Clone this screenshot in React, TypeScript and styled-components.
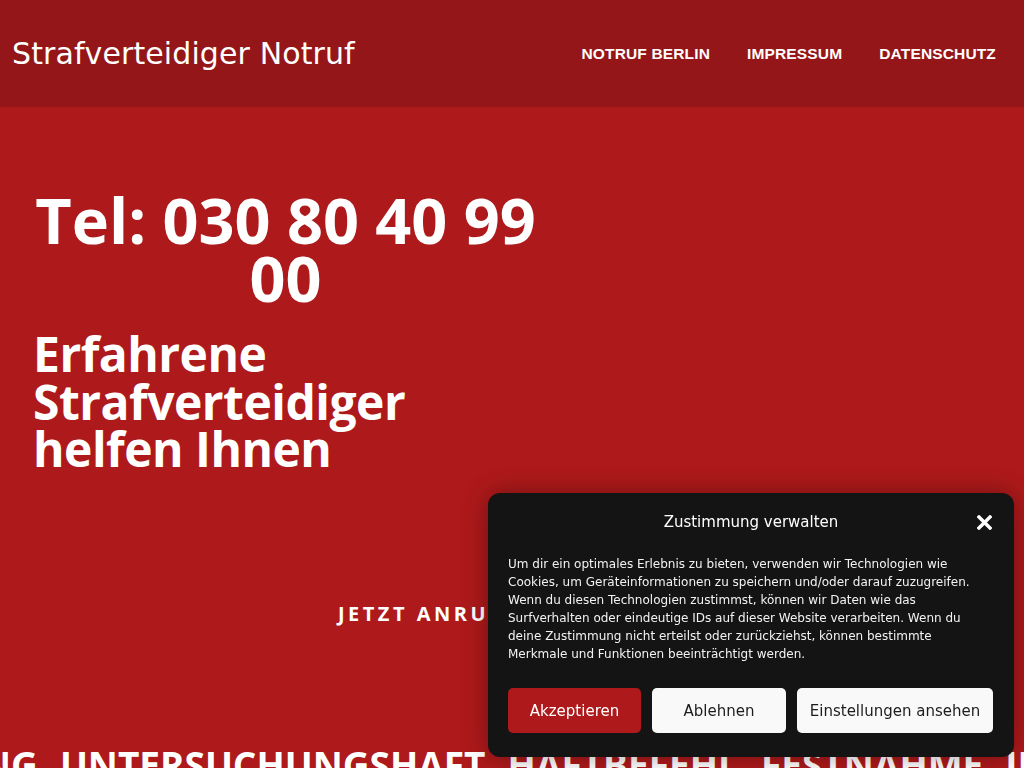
import React from "react";
import styled, { createGlobalStyle } from "styled-components";

const Global = createGlobalStyle`
  html, body { margin: 0; padding: 0; }
  body {
    background: #ae191b;
    font-family: "DejaVu Sans", "Liberation Sans", sans-serif;
    color: #fff;
    overflow: hidden;
  }
  * { box-sizing: border-box; }
`;

const Page = styled.div`
  min-height: 900px;
  background: #ae191b;
`;

const Header = styled.header`
  height: 107px;
  background: #941618;
  display: flex;
  align-items: center;
  justify-content: space-between;
  padding: 0 28px 0 12px;
`;

const Logo = styled.a`
  font-family: "DejaVu Sans", sans-serif;
  font-size: 30px;
  font-weight: 400;
  color: #fff;
  text-decoration: none;
  letter-spacing: 0.1px;
`;

const Nav = styled.nav`
  display: flex;
  gap: 37px;
`;

const NavLink = styled.a`
  font-family: "Liberation Sans", Arial, sans-serif;
  font-weight: 700;
  font-size: 15.5px;
  letter-spacing: 0.15px;
  color: #fff;
  text-transform: uppercase;
  text-decoration: none;
`;

const Hero = styled.section`
  padding: 84px 0 0 33px;
`;

const HeroColumn = styled.div`
  width: 505px;
  display: flex;
  flex-direction: column;
`;

const Phone = styled.h1`
  margin: 0;
  font-family: "Open Sans", sans-serif;
  font-weight: 700;
  font-size: 63px;
  line-height: 58px;
  text-align: center;
  letter-spacing: 0;
`;

const Tagline = styled.h2`
  margin: 23px 0 0;
  font-family: "Open Sans", sans-serif;
  font-weight: 700;
  font-size: 48px;
  line-height: 47.5px;
  letter-spacing: -0.5px;
`;

const CallRow = styled.div`
  display: flex;
  justify-content: flex-end;
  margin-top: 129px;
`;

const CallLink = styled.a`
  font-family: "Open Sans", sans-serif;
  font-weight: 700;
  font-size: 20px;
  line-height: 24px;
  letter-spacing: 3.5px;
  color: #fff;
  text-decoration: none;
  text-transform: uppercase;
`;

const Ticker = styled.div`
  margin-top: 117px;
  overflow: hidden;
  white-space: nowrap;
`;

const Track = styled.div`
  display: flex;
  gap: 22px;
`;

const TickerWord = styled.span`
  font-family: "Open Sans", sans-serif;
  font-weight: 700;
  font-size: 37px;
  line-height: 1.2;
  text-transform: uppercase;
  color: #fff;
`;

const ConsentBox = styled.div`
  position: fixed;
  right: 10px;
  bottom: 11px;
  width: 526px;
  background: #141414;
  border-radius: 12px;
  padding: 19px 20px 24px;
  box-shadow: 0 0 24px rgba(0, 0, 0, 0.35);
  font-family: "DejaVu Sans", sans-serif;
`;

const ConsentHead = styled.div`
  position: relative;
  display: flex;
  justify-content: center;
  align-items: center;
  height: 20px;
`;

const ConsentTitle = styled.div`
  font-size: 15px;
  color: #fff;
`;

const CloseButton = styled.button`
  position: absolute;
  right: 2px;
  top: 2px;
  width: 16px;
  height: 16px;
  padding: 0;
  border: 0;
  background: none;
  display: flex;
  align-items: center;
  justify-content: center;
  cursor: pointer;
`;

const ConsentText = styled.p`
  margin: 23px 0 0;
  font-size: 12px;
  line-height: 18px;
  color: #f2f2f2;
  white-space: nowrap;
`;

const ButtonRow = styled.div`
  display: flex;
  gap: 11px;
  margin-top: 25px;
`;

const ConsentButton = styled.button<{ $w: number; $primary?: boolean }>`
  width: ${(p) => p.$w}px;
  height: 45px;
  border: 0;
  border-radius: 5px;
  font-family: "DejaVu Sans", sans-serif;
  font-size: 15px;
  background: ${(p) => (p.$primary ? "#ae191b" : "#f9f9f9")};
  color: ${(p) => (p.$primary ? "#fff" : "#1d1d1d")};
  cursor: pointer;
  padding: 0;
`;

const tickerWords = [
  "Ermittlung",
  "Untersuchungshaft",
  "Haftbefehl",
  "Festnahme",
  "Ingewahrsamnahme",
];

export default function App() {
  return (
    <Page>
      <Global />
      <Header>
        <Logo href="#">Strafverteidiger Notruf</Logo>
        <Nav>
          <NavLink href="#">Notruf Berlin</NavLink>
          <NavLink href="#">Impressum</NavLink>
          <NavLink href="#">Datenschutz</NavLink>
        </Nav>
      </Header>
      <Hero>
        <HeroColumn>
          <Phone>Tel: 030 80 40 99 00</Phone>
          <Tagline>Erfahrene Strafverteidiger helfen Ihnen</Tagline>
          <CallRow>
            <CallLink href="#">Jetzt anrufen</CallLink>
          </CallRow>
        </HeroColumn>
      </Hero>
      <Ticker>
        <Track style={{ transform: "translateX(-203px)" }}>
          {tickerWords.map((w) => (
            <TickerWord key={w}>{w}</TickerWord>
          ))}
        </Track>
      </Ticker>
      <ConsentBox>
        <ConsentHead>
          <ConsentTitle>Zustimmung verwalten</ConsentTitle>
          <CloseButton aria-label="Schließen">
            <svg width="15" height="15" viewBox="0 0 15 15">
              <path d="M2 2 L13 13 M13 2 L2 13" stroke="#fff" strokeWidth="3.4" strokeLinecap="square" />
            </svg>
          </CloseButton>
        </ConsentHead>
        <ConsentText>
          Um dir ein optimales Erlebnis zu bieten, verwenden wir Technologien wie
          <br />
          Cookies, um Geräteinformationen zu speichern und/oder darauf zuzugreifen.
          <br />
          Wenn du diesen Technologien zustimmst, können wir Daten wie das
          <br />
          Surfverhalten oder eindeutige IDs auf dieser Website verarbeiten. Wenn du
          <br />
          deine Zustimmung nicht erteilst oder zurückziehst, können bestimmte
          <br />
          Merkmale und Funktionen beeinträchtigt werden.
        </ConsentText>
        <ButtonRow>
          <ConsentButton $w={133} $primary>Akzeptieren</ConsentButton>
          <ConsentButton $w={134}>Ablehnen</ConsentButton>
          <ConsentButton $w={196}>Einstellungen ansehen</ConsentButton>
        </ButtonRow>
      </ConsentBox>
    </Page>
  );
}
